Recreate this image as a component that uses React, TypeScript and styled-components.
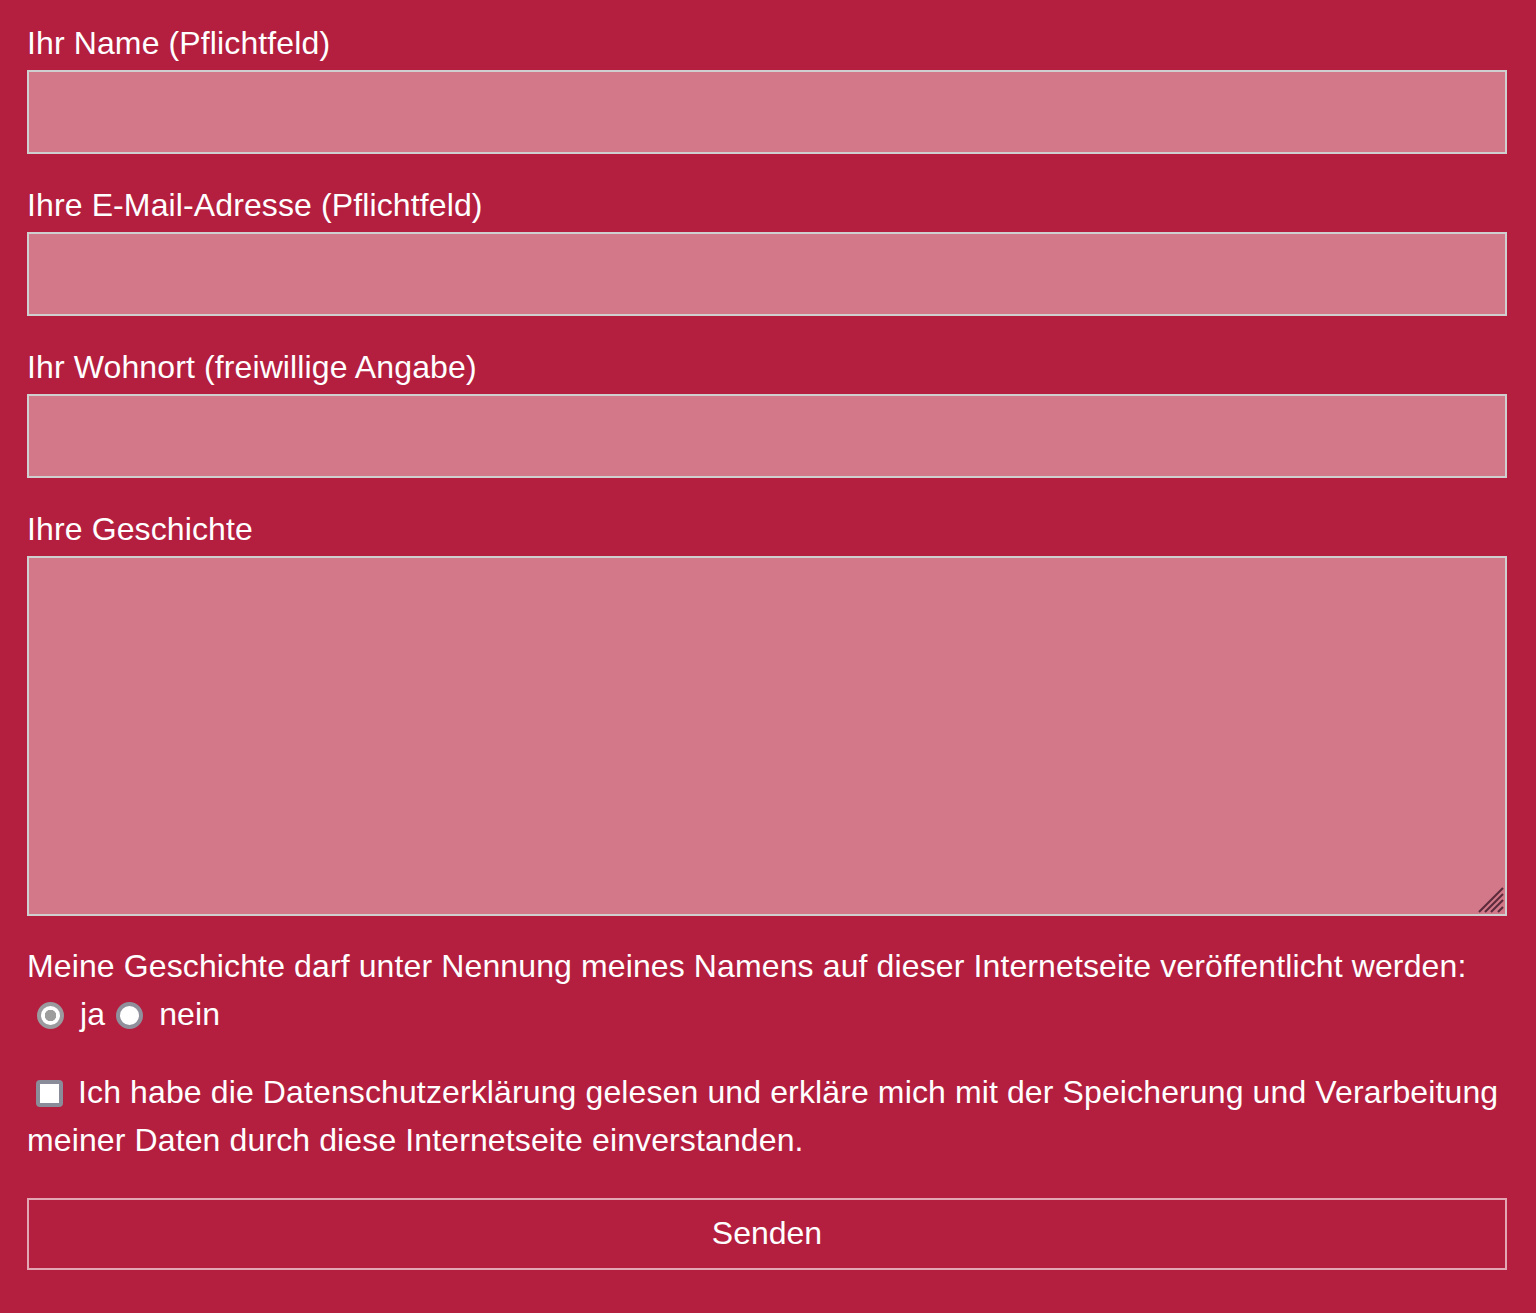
import React from "react";
import styled, { createGlobalStyle } from "styled-components";

const GlobalStyle = createGlobalStyle`
  html, body {
    margin: 0;
    padding: 0;
    background: #b41e3f;
  }
  * { box-sizing: border-box; }
`;

const Form = styled.form`
  background: #b41e3f;
  padding: 19px 29px 43px 27px;
  font-family: "Liberation Sans", Helvetica, Arial, sans-serif;
  font-size: 32px;
  line-height: 48px;
  letter-spacing: 0.12px;
  color: #ffffff;
  min-height: 1313px;
`;

const Field = styled.div<{ $last?: boolean }>`
  display: flex;
  flex-direction: column;
  margin-bottom: ${(p) => (p.$last ? "26px" : "27px")};
`;

const Label = styled.label`
  display: block;
  margin-bottom: 3px;
`;

const TextInput = styled.input`
  display: block;
  width: 100%;
  height: 84px;
  margin: 0;
  border: 2px solid #cfcfcf;
  background: #d27888;
  color: #ffffff;
  font: inherit;
  padding: 0 12px;
  outline: none;
`;

const AreaWrap = styled.div`
  position: relative;
  height: 360px;
`;

const TextArea = styled.textarea`
  display: block;
  width: 100%;
  height: 360px;
  margin: 0;
  border: 2px solid #cfcfcf;
  background: #d27888;
  color: #ffffff;
  font: inherit;
  padding: 8px 12px;
  resize: none;
  outline: none;
`;

const Grip = styled.svg`
  position: absolute;
  right: 2px;
  bottom: 2px;
  width: 28px;
  height: 28px;
  pointer-events: none;
`;

const Paragraph = styled.p`
  margin: 0;
`;

const RadioRow = styled.div`
  display: flex;
  align-items: center;
  height: 48px;
  padding-left: 10px;
  gap: 11px;
`;

const RadioOption = styled.label`
  display: inline-flex;
  align-items: center;
  gap: 16px;
`;

const Radio = styled.input.attrs({ type: "radio" })`
  appearance: none;
  -webkit-appearance: none;
  margin: 3px 0 0 0;
  width: 27px;
  height: 27px;
  border-radius: 50%;
  border: 4px solid #8f909c;
  background: #ffffff;
  &:checked {
    border-color: #9a9a9f;
    background: radial-gradient(circle, #9d9d9d 0 5.5px, #ffffff 6px);
  }
`;

const Consent = styled.p`
  margin: 30px 0 34px 0;
`;

const Checkbox = styled.input.attrs({ type: "checkbox" })`
  appearance: none;
  -webkit-appearance: none;
  display: inline-block;
  width: 27px;
  height: 27px;
  margin: 0 15px 0 9px;
  vertical-align: -4px;
  border: 4px solid #8b8c99;
  border-radius: 4px;
  background: #ffffff;
`;

const SubmitButton = styled.button`
  display: block;
  width: 100%;
  height: 72px;
  margin: 0;
  border: 2px solid #e3a7b4;
  background: transparent;
  color: #ffffff;
  font: inherit;
  line-height: 1;
  padding: 0 0 3px 0;
  cursor: pointer;
`;

export default function App() {
  return (
    <>
      <GlobalStyle />
      <Form onSubmit={(e) => e.preventDefault()}>
        <Field>
          <Label htmlFor="name">Ihr Name (Pflichtfeld)</Label>
          <TextInput id="name" type="text" />
        </Field>
        <Field>
          <Label htmlFor="email">Ihre E-Mail-Adresse (Pflichtfeld)</Label>
          <TextInput id="email" type="email" />
        </Field>
        <Field>
          <Label htmlFor="ort">Ihr Wohnort (freiwillige Angabe)</Label>
          <TextInput id="ort" type="text" />
        </Field>
        <Field $last>
          <Label htmlFor="story">Ihre Geschichte</Label>
          <AreaWrap>
            <TextArea id="story" />
            <Grip viewBox="0 0 28 28">
              <g stroke="#5b2b3c" strokeWidth="2.2" strokeLinecap="butt">
                <line x1="2" y1="26" x2="26" y2="2" />
                <line x1="8" y1="26" x2="26" y2="8" />
                <line x1="14" y1="26" x2="26" y2="14" />
                <line x1="21" y1="26" x2="26" y2="21" />
              </g>
            </Grip>
          </AreaWrap>
        </Field>
        <Paragraph>
          Meine Geschichte darf unter Nennung meines Namens auf dieser Internetseite veröffentlicht werden:
        </Paragraph>
        <RadioRow>
          <RadioOption>
            <Radio name="publish" value="ja" defaultChecked />
            ja
          </RadioOption>
          <RadioOption>
            <Radio name="publish" value="nein" />
            nein
          </RadioOption>
        </RadioRow>
        <Consent>
          <Checkbox id="consent" />
          <label htmlFor="consent">
            Ich habe die Datenschutzerklärung gelesen und erkläre mich mit der Speicherung und Verarbeitung meiner Daten durch diese Internetseite einverstanden.
          </label>
        </Consent>
        <SubmitButton type="submit">Senden</SubmitButton>
      </Form>
    </>
  );
}
